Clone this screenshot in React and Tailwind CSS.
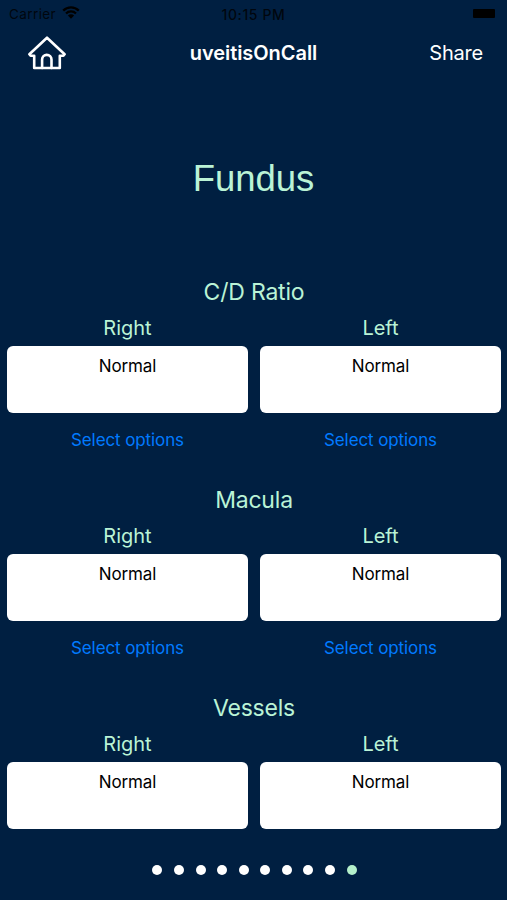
import { useState } from "react";

const sections = [
  { title: "C/D Ratio", selectable: true },
  { title: "Macula", selectable: true },
  { title: "Vessels", selectable: false },
];
const pageCount = 10;

function StatusBar() {
  return (
    <div className="grid grid-cols-3 h-7 px-[9px] items-center text-black/80 text-[13.5px]">
      <div className="flex items-center gap-[6px]">
        <span className="tracking-[0.4px]">Carrier</span>
        <svg
          viewBox="0 0 18 13"
          className="w-[18px] h-[13px] mt-[-3px]"
          fill="none"
        >
          <path
            d="M1.2 4.6a11 11 0 0 1 15.6 0M4 7.5a7 7 0 0 1 10 0"
            stroke="black"
            strokeWidth="2.3"
          />
          <path d="M9 12.8 5.9 9.6a4.4 4.4 0 0 1 6.2 0z" fill="black" />
        </svg>
      </div>
      <span className="text-center text-[14px] font-medium tracking-[0.6px] whitespace-nowrap">
        10:15 PM
      </span>
      <div className="flex justify-end pr-[3px]">
        <div className="w-[22px] h-[9px] mt-[-2px] bg-black rounded-[1px]"></div>
      </div>
    </div>
  );
}

function NavBar() {
  return (
    <div className="grid grid-cols-3 h-[49px] items-center text-white">
      <button aria-label="Home" className="ml-7 w-[38px]">
        <svg
          viewBox="0 0 38 34"
          className="w-[38px] h-[34px]"
          fill="none"
          stroke="currentColor"
          strokeWidth="2.6"
          strokeLinejoin="round"
          strokeLinecap="round"
        >
          <path d="M19 1.7 1.4 18.3l1.2 1.5h3.6v12.2h7.9V23.6a4.7 4.7 0 0 1 9.4 0v8.4h8.3V19.8h3.6l1.2-1.5z" />
          <path d="M14.1 32h9.4" />
        </svg>
      </button>
      <h1 className="text-center text-[20px] font-semibold tracking-[-0.05px]">
        uveitisOnCall
      </h1>
      <button className="text-right pr-[24px] text-[20px] tracking-[-0.2px]">
        Share
      </button>
    </div>
  );
}

function EyeField({ side, value, selectable }) {
  return (
    <div className="flex flex-col text-center">
      <h3 className="h-9 leading-9 text-[20px] text-[#baf3d6]">{side}</h3>
      <div className="h-[67px] pt-[8px] bg-white rounded-md text-[17px] tracking-[-0.1px] leading-6 text-black">
        {value}
      </div>
      {selectable && (
        <button className="h-[54px] pt-[2px] text-[17px] tracking-[-0.1px] text-[#007aff]">
          Select options
        </button>
      )}
    </div>
  );
}

export default function App() {
  const [page, setPage] = useState(pageCount - 1);

  return (
    <div className="flex flex-col h-[900px] w-full bg-[#001f41] font-['Inter',sans-serif]">
      <StatusBar />
      <NavBar />
      <h2 className="h-[197px] pt-[74px] text-center text-[36.5px] leading-[56px] text-[#baf3d6] font-['Liberation_Sans',sans-serif]">
        Fundus
      </h2>

      {/* Findings */}
      <div className="h-[566px]">
        {sections.map(({ title, selectable }) => (
          <section key={title} className="h-52 pl-[7px] pr-[6px]">
            <h2 className="h-9 leading-9 text-center text-[23px] tracking-[-0.2px] text-[#baf3d6]">
              {title}
            </h2>
            <div className="grid grid-cols-2 gap-3">
              <EyeField side="Right" value="Normal" selectable={selectable} />
              <EyeField side="Left" value="Normal" selectable={selectable} />
            </div>
          </section>
        ))}
      </div>

      {/* Page dots */}
      <div className="flex flex-1 justify-center pt-[25px] pl-[2px] gap-[11.6px]">
        {Array.from({ length: pageCount }, (_, i) => (
          <button
            key={i}
            aria-label={`Page ${i + 1}`}
            onClick={() => setPage(i)}
            className={`w-[10px] h-[10px] rounded-full ${
              i === page ? "bg-[#b4f0cb]" : "bg-white"
            }`}
          ></button>
        ))}
      </div>
    </div>
  );
}
